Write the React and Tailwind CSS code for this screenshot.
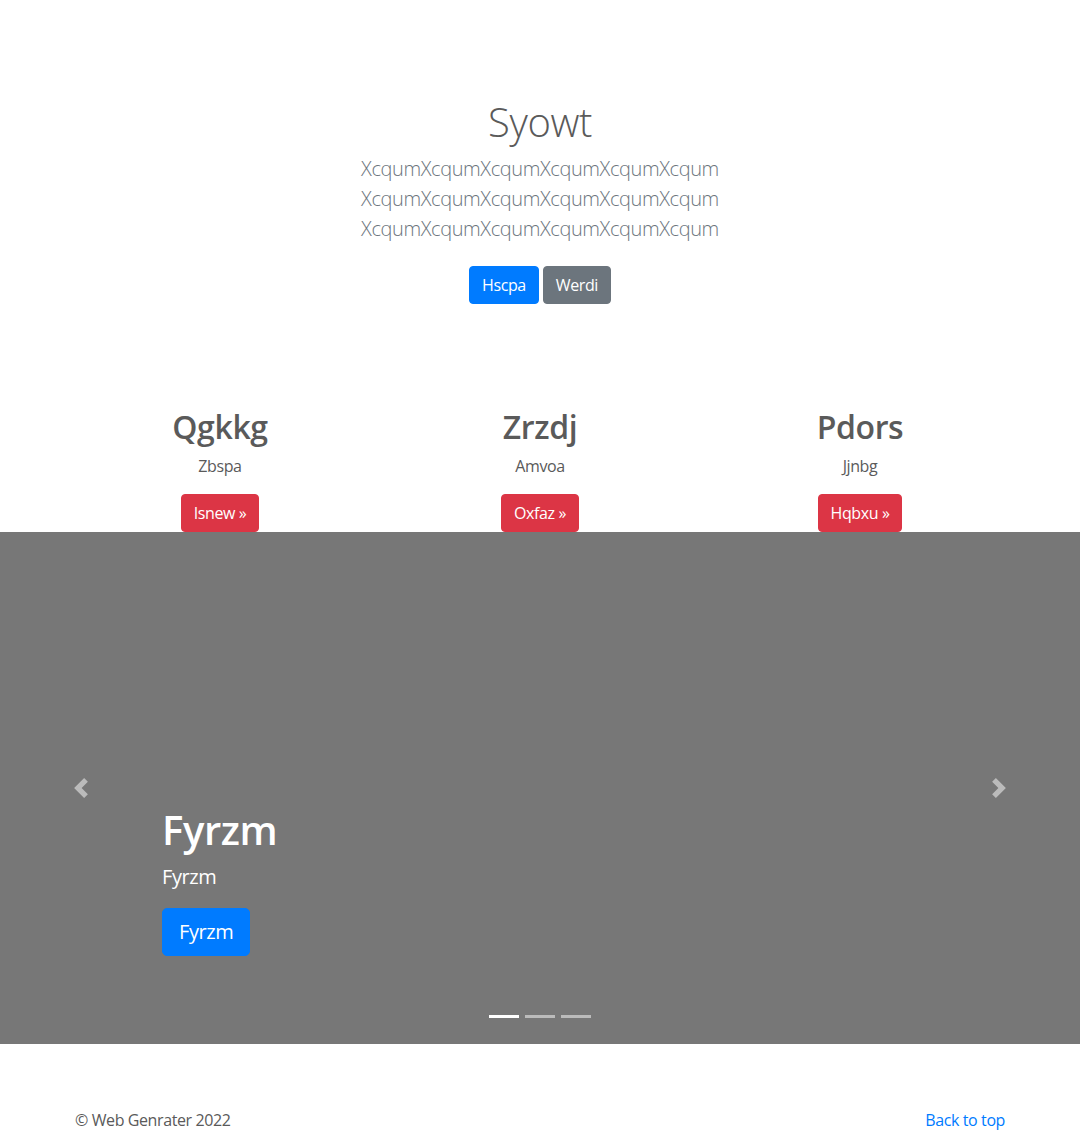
import React from 'react';

const FONT = "font-['Open_Sans','Liberation_Sans',sans-serif]";

function Chevron({ dir }) {
  return (
    <svg viewBox="0 0 8 8" className="w-5 h-5" fill="#fff" opacity="0.5">
      {dir === 'prev'
        ? <path d="M5.25 0l-4 4 4 4 1.5-1.5L4.25 4l2.5-2.5L5.25 0z" />
        : <path d="M2.75 0l-1.5 1.5L3.75 4l-2.5 2.5L2.75 8l4-4-4-4z" />}
    </svg>
  );
}

const features = [
  { title: 'Qgkkg', text: 'Zbspa', btn: 'Isnew' },
  { title: 'Zrzdj', text: 'Amvoa', btn: 'Oxfaz' },
  { title: 'Pdors', text: 'Jjnbg', btn: 'Hqbxu' },
];

export default function App() {
  const chunk = 'XcqumXcqumXcqumXcqumXcqumXcqum';
  return (
    <div className={`${FONT} text-[#5a5a5a] bg-white min-h-[1132px] text-base leading-6 tracking-[-0.025em]`}>
      {/* Jumbotron */}
      <section className="text-center pt-[98px] pb-[56px]">
        <h1 className="text-[40px] leading-[48px] font-light mb-2">Syowt</h1>
        <p className="max-w-[450px] mx-auto text-xl leading-[30px] font-light text-[#6c757d]">
          {chunk} {chunk} {chunk}
        </p>
        <div className="flex justify-center gap-1 mt-[22px]">
          <a className="px-3 py-1.5 rounded bg-[#007bff] text-white border border-[#007bff]">Hscpa</a>
          <a className="px-3 py-1.5 rounded bg-[#6c757d] text-white border border-[#6c757d]">Werdi</a>
        </div>
      </section>

      {/* Marketing columns */}
      <div className="w-[960px] mx-auto grid grid-cols-3 pt-[48px]">
        {features.map((f) => (
          <div key={f.title} className="flex flex-col items-center text-center">
            <h2 className="text-[32px] leading-[38px] font-semibold mb-2">{f.title}</h2>
            <p className="mb-4">{f.text}</p>
            <a className="px-3 py-1.5 rounded bg-[#dc3545] text-white border border-[#dc3545]">
              {f.btn} &raquo;
            </a>
          </div>
        ))}
      </div>

      {/* Carousel */}
      <div className="relative h-[512px] bg-[#777] flex">
        <button className="w-[15%] flex items-center justify-center">
          <Chevron dir="prev" />
        </button>
        <div className="flex-1 flex flex-col justify-end pb-[88px] text-white">
          <h1 className="text-[40px] leading-[48px] font-semibold mb-2">Fyrzm</h1>
          <p className="text-xl leading-[30px] mb-4">Fyrzm</p>
          <div>
            <a className="inline-block px-4 py-2 text-xl leading-[30px] rounded-[5px] bg-[#007bff] border border-[#007bff]">
              Fyrzm
            </a>
          </div>
        </div>
        <button className="w-[15%] flex items-center justify-center">
          <Chevron dir="next" />
        </button>
        <div className="absolute left-0 right-0 bottom-[26px] flex justify-center gap-[6px]">
          <span className="w-[30px] h-[3px] bg-white" />
          <span className="w-[30px] h-[3px] bg-white/50" />
          <span className="w-[30px] h-[3px] bg-white/50" />
        </div>
      </div>

      {/* Footer */}
      <footer className="w-[930px] mx-auto pt-[64px] flex justify-between">
        <p>&copy; Web Genrater 2022</p>
        <a className="text-[#007bff]">Back to top</a>
      </footer>
    </div>
  );
}
